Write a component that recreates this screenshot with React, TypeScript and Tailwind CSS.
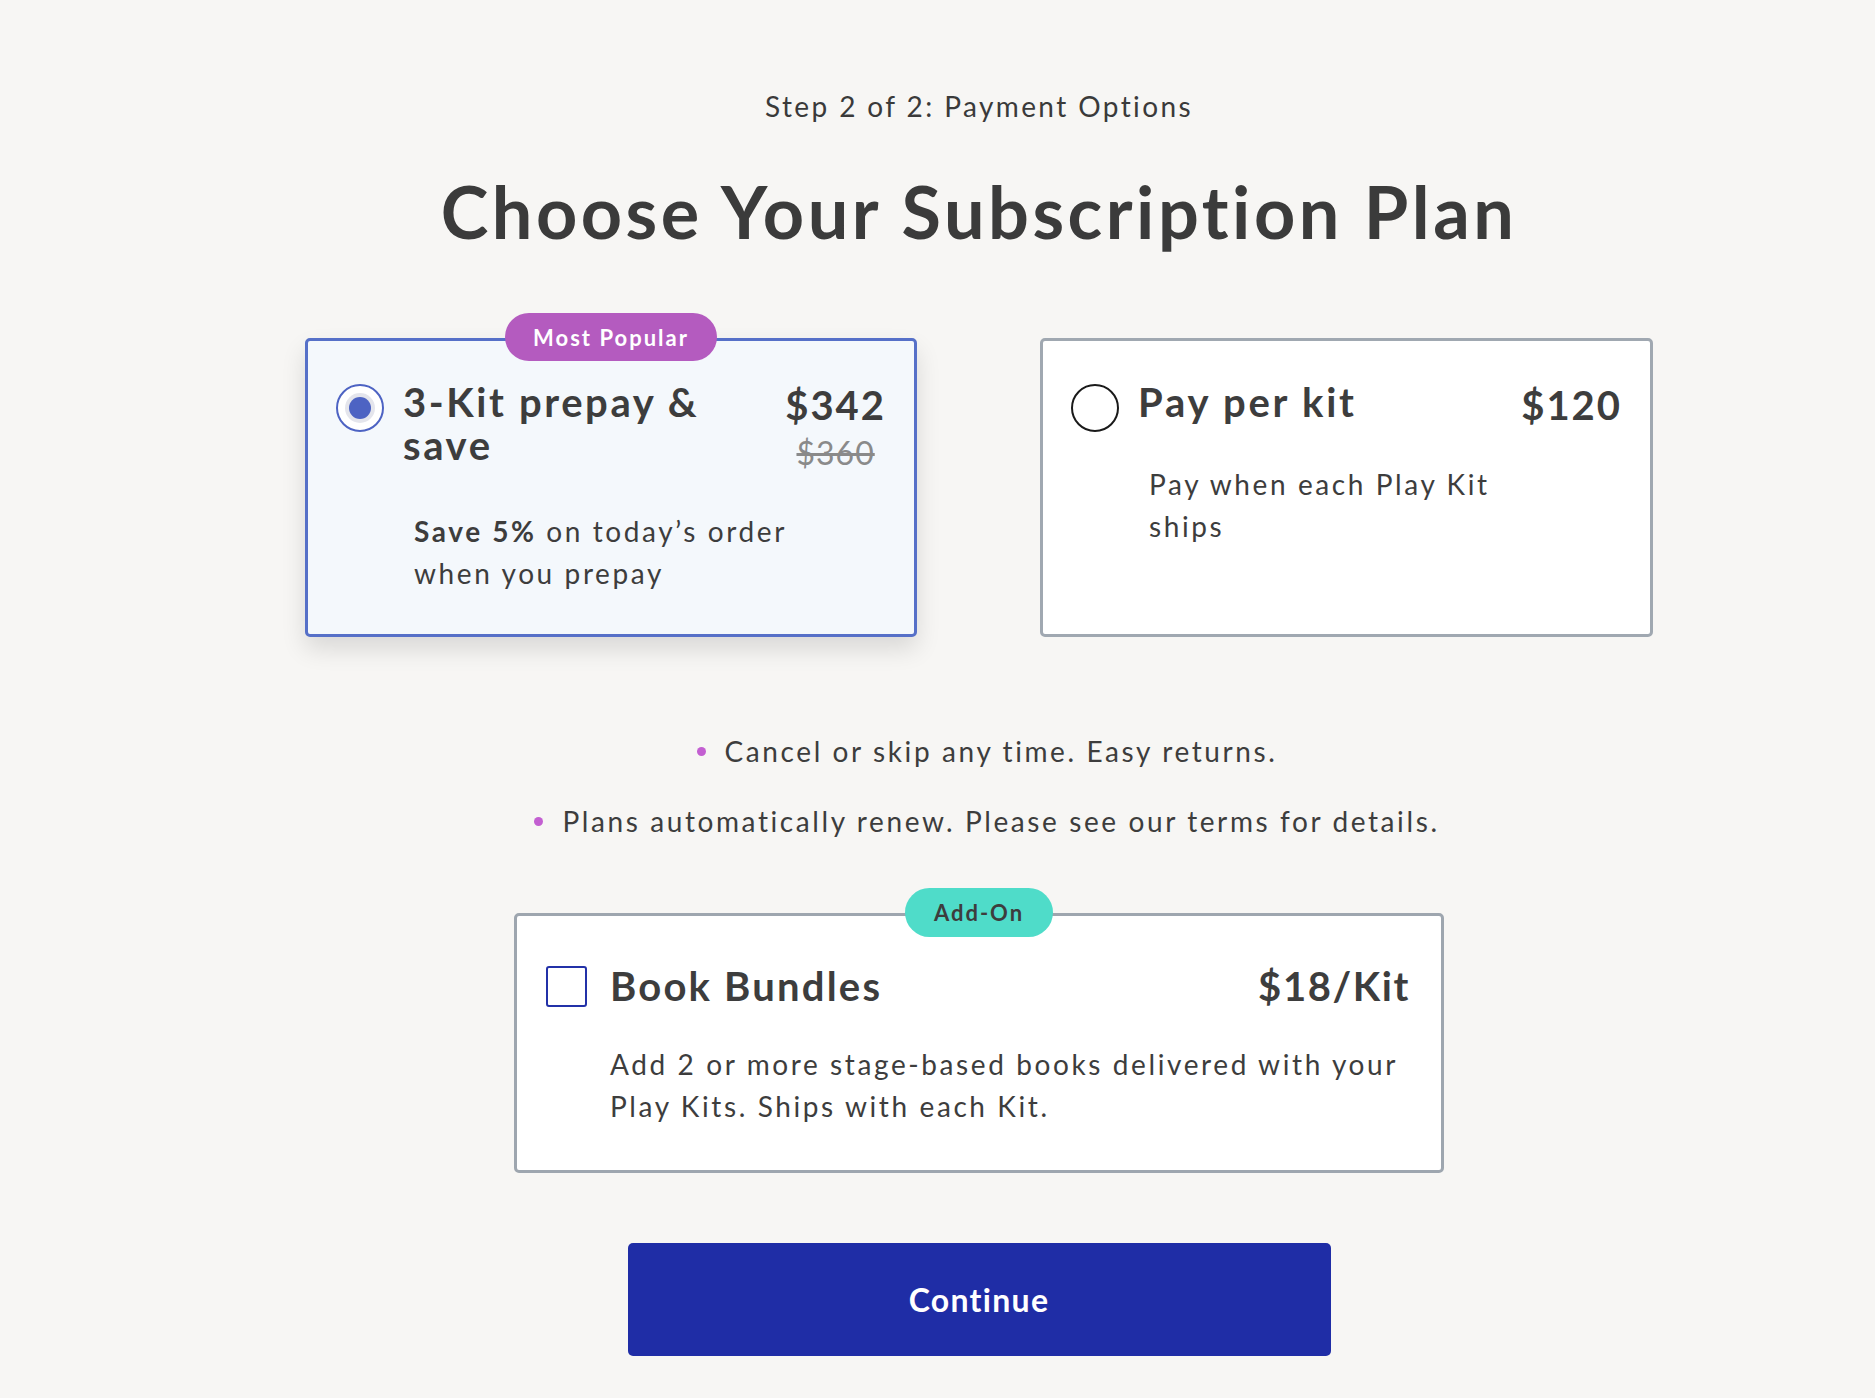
export default function App() {
  return (
    <div className="min-h-[1398px] w-full bg-[#f7f6f4] font-['Lato','Open_Sans',sans-serif] text-[#3d3d3d]">
      <div className="flex flex-col items-center pl-[83px] pt-[89px]">
        <p className="text-[28px] leading-[34px] tracking-[2.4px] text-[#3a3a3a]">Step 2 of 2: Payment Options</p>
        <h1 className="mt-[45px] text-[72px] font-bold leading-[86px] tracking-[3.5px] text-[#3b3b3b]">
          Choose Your Subscription Plan
        </h1>

        <div className="mt-[84px] flex gap-[123px]">
          {/* Card 1 */}
          <div className="relative h-[299px] w-[612px] rounded-[5px] border-[3px] border-[#5670c8] bg-[#f4f8fc] px-[28px] pt-[40px] shadow-[0_12px_24px_rgba(0,0,0,0.12)]">
            <span className="absolute left-1/2 top-[-28px] flex h-[48px] w-[212px] -translate-x-1/2 items-center justify-center rounded-full bg-[#b45bbf] text-[22px] font-bold tracking-[2px] text-white">
              Most Popular
            </span>
            <div className="flex items-start">
              <div className="mt-[3px] flex h-[48px] w-[48px] shrink-0 items-center justify-center rounded-full border-2 border-[#4d63c3] bg-white">
                <div className="h-[22px] w-[22px] rounded-full bg-[#4d63c3] shadow-[0_0_0_4px_#e4e5ec]" />
              </div>
              <div className="ml-[19px] flex-1 whitespace-nowrap text-[40px] font-bold leading-[43px] tracking-[2.6px]">
                3-Kit prepay &amp;
                <br />
                save
              </div>
              <div className="mt-[3px] flex flex-col items-center">
                <span className="text-[40px] font-bold leading-[43px] tracking-[2px]">$342</span>
                <span className="mt-[12px] text-[32px] leading-[28px] tracking-[1px] text-[#8a8a8a] line-through">$360</span>
              </div>
            </div>
            <p className="ml-[78px] mt-[43px] whitespace-nowrap text-[28px] leading-[42px] tracking-[2.6px]">
              <span className="font-bold">Save 5%</span> on today’s order
              <br />
              when you prepay
            </p>
          </div>

          {/* Card 2 */}
          <div className="relative h-[299px] w-[613px] rounded-[5px] border-[3px] border-[#a0a8b1] bg-white px-[28px] pt-[40px]">
            <div className="flex items-start">
              <div className="mt-[3px] h-[48px] w-[48px] shrink-0 rounded-full border-2 border-[#1a1a1a] bg-white" />
              <div className="ml-[19px] flex-1 whitespace-nowrap text-[40px] font-bold leading-[43px] tracking-[2.8px]">Pay per kit</div>
              <span className="mt-[3px] text-[40px] font-bold leading-[43px] tracking-[2px]">$120</span>
            </div>
            <p className="ml-[78px] mt-[31px] whitespace-nowrap text-[28px] leading-[42px] tracking-[2.6px]">
              Pay when each Play Kit
              <br />
              ships
            </p>
          </div>
        </div>

        <div className="ml-[16px] mt-[93px] flex flex-col items-center gap-[28px] text-[28px] leading-[42px] tracking-[2.6px]">
          <div className="flex items-center gap-[19px]">
            <span className="h-[9px] w-[9px] rounded-full bg-[#c35fd1] blur-[0.6px]" />
            <span>Cancel or skip any time. Easy returns.</span>
          </div>
          <div className="flex items-center gap-[19px]">
            <span className="h-[9px] w-[9px] rounded-full bg-[#c35fd1] blur-[0.6px]" />
            <span>Plans automatically renew. Please see our terms for details.</span>
          </div>
        </div>

        {/* Add-on card */}
        <div className="relative mt-[71px] h-[260px] w-[930px] rounded-[5px] border-[3px] border-[#9ea6af] bg-white pl-[29px] pr-[31px] pt-[49px]">
          <span className="absolute left-1/2 top-[-28px] flex h-[49px] w-[148px] -translate-x-1/2 items-center justify-center rounded-full bg-[#4fdcc9] text-[22px] font-bold tracking-[2px] text-[#3d3d3d]">
            Add-On
          </span>
          <div className="flex items-start">
            <div className="mt-[1px] h-[41px] w-[41px] shrink-0 rounded-[3px] border-[2.5px] border-[#2331a8] bg-white" />
            <div className="ml-[23px] flex-1 whitespace-nowrap text-[40px] font-bold leading-[43px] tracking-[2.2px]">Book Bundles</div>
            <span className="text-[40px] font-bold leading-[43px] tracking-[1.6px]">$18/Kit</span>
          </div>
          <p className="ml-[64px] mt-[35px] whitespace-nowrap text-[28px] leading-[42px] tracking-[2.6px]">
            Add 2 or more stage-based books delivered with your
            <br />
            Play Kits. Ships with each Kit.
          </p>
        </div>

        <button className="mt-[70px] flex h-[113px] w-[703px] items-center justify-center rounded-[5px] bg-[#1f2da6] text-[32px] font-bold tracking-[1.3px] text-white">
          Continue
        </button>
      </div>
    </div>
  );
}
